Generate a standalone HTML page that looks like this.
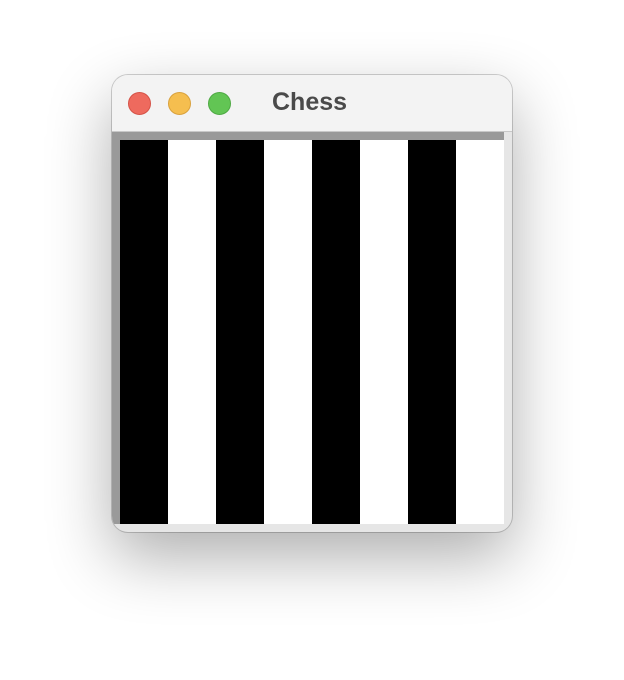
<!DOCTYPE html>
<html><head><meta charset="utf-8"><style>
html,body{margin:0;padding:0;background:#fff;width:624px;height:680px;overflow:hidden;position:relative;font-family:"Liberation Sans",sans-serif}
.win{position:absolute;left:112px;top:75px;width:400px;height:457px;border-radius:16px;overflow:hidden;background:#e6e6e6;box-shadow:0 25px 65px rgba(0,0,0,0.32),0 0 0 1px rgba(0,0,0,0.18)}
.tb{position:absolute;left:0;top:0;width:400px;height:56px;background:#f3f3f3;border-bottom:1px solid #c8c8c8}
.dot{position:absolute;top:17px;width:23px;height:23px;border-radius:50%;box-sizing:border-box}
.title{position:absolute;left:160px;top:13px;font-weight:bold;font-size:25px;color:#4a4a4a}
.band{position:absolute;left:0;top:57px;width:392px;height:8px;background:#999}
.lstrip{position:absolute;left:0;top:57px;width:8px;height:392px;background:#9a9a9a}
.s{position:absolute;top:65px;width:48px;height:384px}
</style></head><body>
<div class="win">
<div class="tb">
<div class="dot" style="left:16px;background:#ee6a5e;border:1px solid #d55247"></div>
<div class="dot" style="left:56px;background:#f5be4f;border:1px solid #d9a13c"></div>
<div class="dot" style="left:96px;background:#62c554;border:1px solid #4ea943"></div>
<div class="title">Chess</div>
</div>
<div class="band"></div>
<div class="lstrip"></div>
<div class="s" style="left:8px;background:#000"></div>
<div class="s" style="left:56px;background:#fff"></div>
<div class="s" style="left:104px;background:#000"></div>
<div class="s" style="left:152px;background:#fff"></div>
<div class="s" style="left:200px;background:#000"></div>
<div class="s" style="left:248px;background:#fff"></div>
<div class="s" style="left:296px;background:#000"></div>
<div class="s" style="left:344px;background:#fff"></div>
</div>
</body></html>
